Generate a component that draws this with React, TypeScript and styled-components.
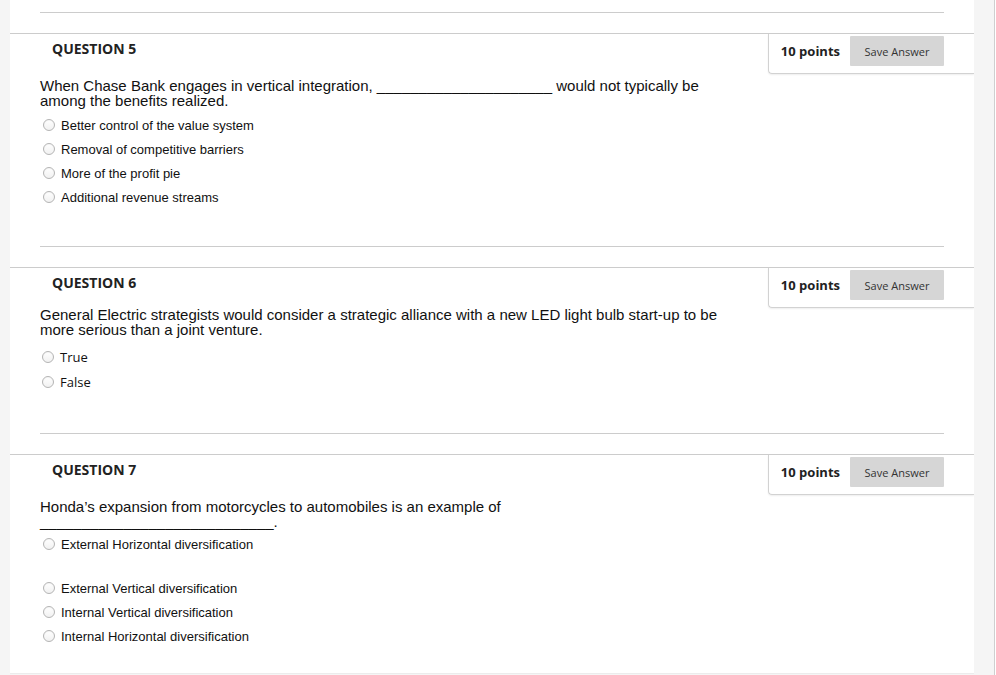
import React from "react";
import styled, { createGlobalStyle } from "styled-components";

const GlobalStyle = createGlobalStyle`
  html, body {
    margin: 0;
    padding: 0;
    background: #ffffff;
  }
  body {
    font-family: "Liberation Sans", Arial, Helvetica, sans-serif;
    color: #111;
  }
  * { box-sizing: border-box; }
`;

const Frame = styled.div`
  width: 995px;
  min-height: 675px;
  background: #f5f5f5;
  border-right: 1px solid #cfcfcf;
  display: flex;
  align-items: flex-start;
`;

const Panel = styled.main`
  margin-left: 10px;
  width: 964px;
  height: 673px;
  padding-top: 12px;
  background: #ffffff;
  box-shadow: 0 1px 0 #ececec;
  overflow: hidden;
`;

const Section = styled.section<{ $padBottom: number }>`
  padding-bottom: ${(p) => p.$padBottom}px;
`;

const Divider = styled.hr`
  margin: 0 30px 20px;
  height: 0;
  border: 0;
  border-top: 1px solid #cccccc;
`;

const Header = styled.div`
  display: flex;
  justify-content: space-between;
  align-items: flex-start;
  border-top: 1px solid #cccccc;
`;

const Title = styled.h3`
  margin: 0;
  padding: 5px 0 0 42px;
  font-family: "Open Sans", sans-serif;
  font-weight: 700;
  font-size: 14px;
  line-height: 20px;
  color: #222;
`;

const PointsBox = styled.div`
  display: flex;
  align-items: center;
  gap: 10px;
  padding: 2px 30px 7px 12px;
  border-left: 1px solid #d2d2d2;
  border-bottom: 1px solid #d2d2d2;
  border-bottom-left-radius: 4px;
  box-shadow: 0 1px 2px rgba(0, 0, 0, 0.07);
`;

const Points = styled.span`
  font-family: "Open Sans", sans-serif;
  font-weight: 700;
  font-size: 13px;
  color: #222;
  white-space: nowrap;
`;

const SaveButton = styled.button`
  width: 94px;
  height: 30px;
  border: 0;
  border-radius: 1px;
  background: #d6d6d6;
  color: #333;
  font-family: "Open Sans", sans-serif;
  font-size: 11px;
  padding: 0;
  cursor: pointer;
`;

const Body = styled.div`
  padding: 0 30px;
`;

const Prompt = styled.p<{ $top: number }>`
  margin: ${(p) => p.$top}px 0 0;
  max-width: 690px;
  font-family: "Liberation Sans", Arial, Helvetica, sans-serif;
  font-size: 15px;
  line-height: 15px;
  color: #111;
`;

const OptionList = styled.ul<{ $top: number }>`
  list-style: none;
  margin: ${(p) => p.$top}px 0 0;
  padding: 0;
`;

const Option = styled.li<{ $height: number; $sans?: boolean; $after?: number; $indent: number }>`
  display: flex;
  align-items: center;
  gap: 6px;
  height: ${(p) => p.$height}px;
  margin-bottom: ${(p) => p.$after ?? 0}px;
  padding-left: ${(p) => p.$indent}px;
  font-family: ${(p) =>
    p.$sans ? `"Open Sans", sans-serif` : `"Liberation Sans", Arial, Helvetica, sans-serif`};
  font-size: 13px;
  color: #111;
`;

const Radio = styled.span`
  width: 12px;
  height: 12px;
  flex: none;
  border-radius: 50%;
  border: 1px solid #b4b4b4;
  background: linear-gradient(#ffffff, #f1f1f1);
  box-shadow: inset 0 1px 1px rgba(0, 0, 0, 0.04);
`;

type Q = {
  n: number;
  prompt: string;
  promptTop: number;
  listTop: number;
  rowH: number;
  sans?: boolean;
  indent: number;
  padBottom: number;
  options: { label: string; after?: number }[];
};

const questions: Q[] = [
  {
    n: 5,
    prompt:
      "When Chase Bank engages in vertical integration, _____________________ would not typically be among the benefits realized.",
    promptTop: 4,
    listTop: 5,
    rowH: 24,
    indent: 3,
    padBottom: 37,
    options: [
      { label: "Better control of the value system" },
      { label: "Removal of competitive barriers" },
      { label: "More of the profit pie" },
      { label: "Additional revenue streams" },
    ],
  },
  {
    n: 6,
    prompt:
      "General Electric strategists would consider a strategic alliance with a new LED light bulb start-up to be more serious than a joint venture.",
    promptTop: -1,
    listTop: 7,
    rowH: 25,
    sans: true,
    indent: 2,
    padBottom: 39,
    options: [{ label: "True" }, { label: "False" }],
  },
  {
    n: 7,
    prompt:
      "Honda\u2019s expansion from motorcycles to automobiles is an example of ____________________________.",
    promptTop: 4,
    listTop: 3,
    rowH: 24,
    indent: 3,
    padBottom: 20,
    options: [
      { label: "External Horizontal diversification", after: 20 },
      { label: "External Vertical diversification" },
      { label: "Internal Vertical diversification" },
      { label: "Internal Horizontal diversification" },
    ],
  },
];

export default function App() {
  return (
    <>
      <GlobalStyle />
      <Frame>
        <Panel>
          {questions.map((q) => (
            <Section key={q.n} $padBottom={q.padBottom}>
              <Divider />
              <Header>
                <Title>QUESTION {q.n}</Title>
                <PointsBox>
                  <Points>10 points</Points>
                  <SaveButton type="button">Save Answer</SaveButton>
                </PointsBox>
              </Header>
              <Body>
                <Prompt $top={q.promptTop}>{q.prompt}</Prompt>
                <OptionList $top={q.listTop}>
                  {q.options.map((o) => (
                    <Option
                      key={o.label}
                      $height={q.rowH}
                      $sans={q.sans}
                      $after={o.after}
                      $indent={q.indent}
                    >
                      <Radio />
                      <span>{o.label}</span>
                    </Option>
                  ))}
                </OptionList>
              </Body>
            </Section>
          ))}
        </Panel>
      </Frame>
    </>
  );
}
